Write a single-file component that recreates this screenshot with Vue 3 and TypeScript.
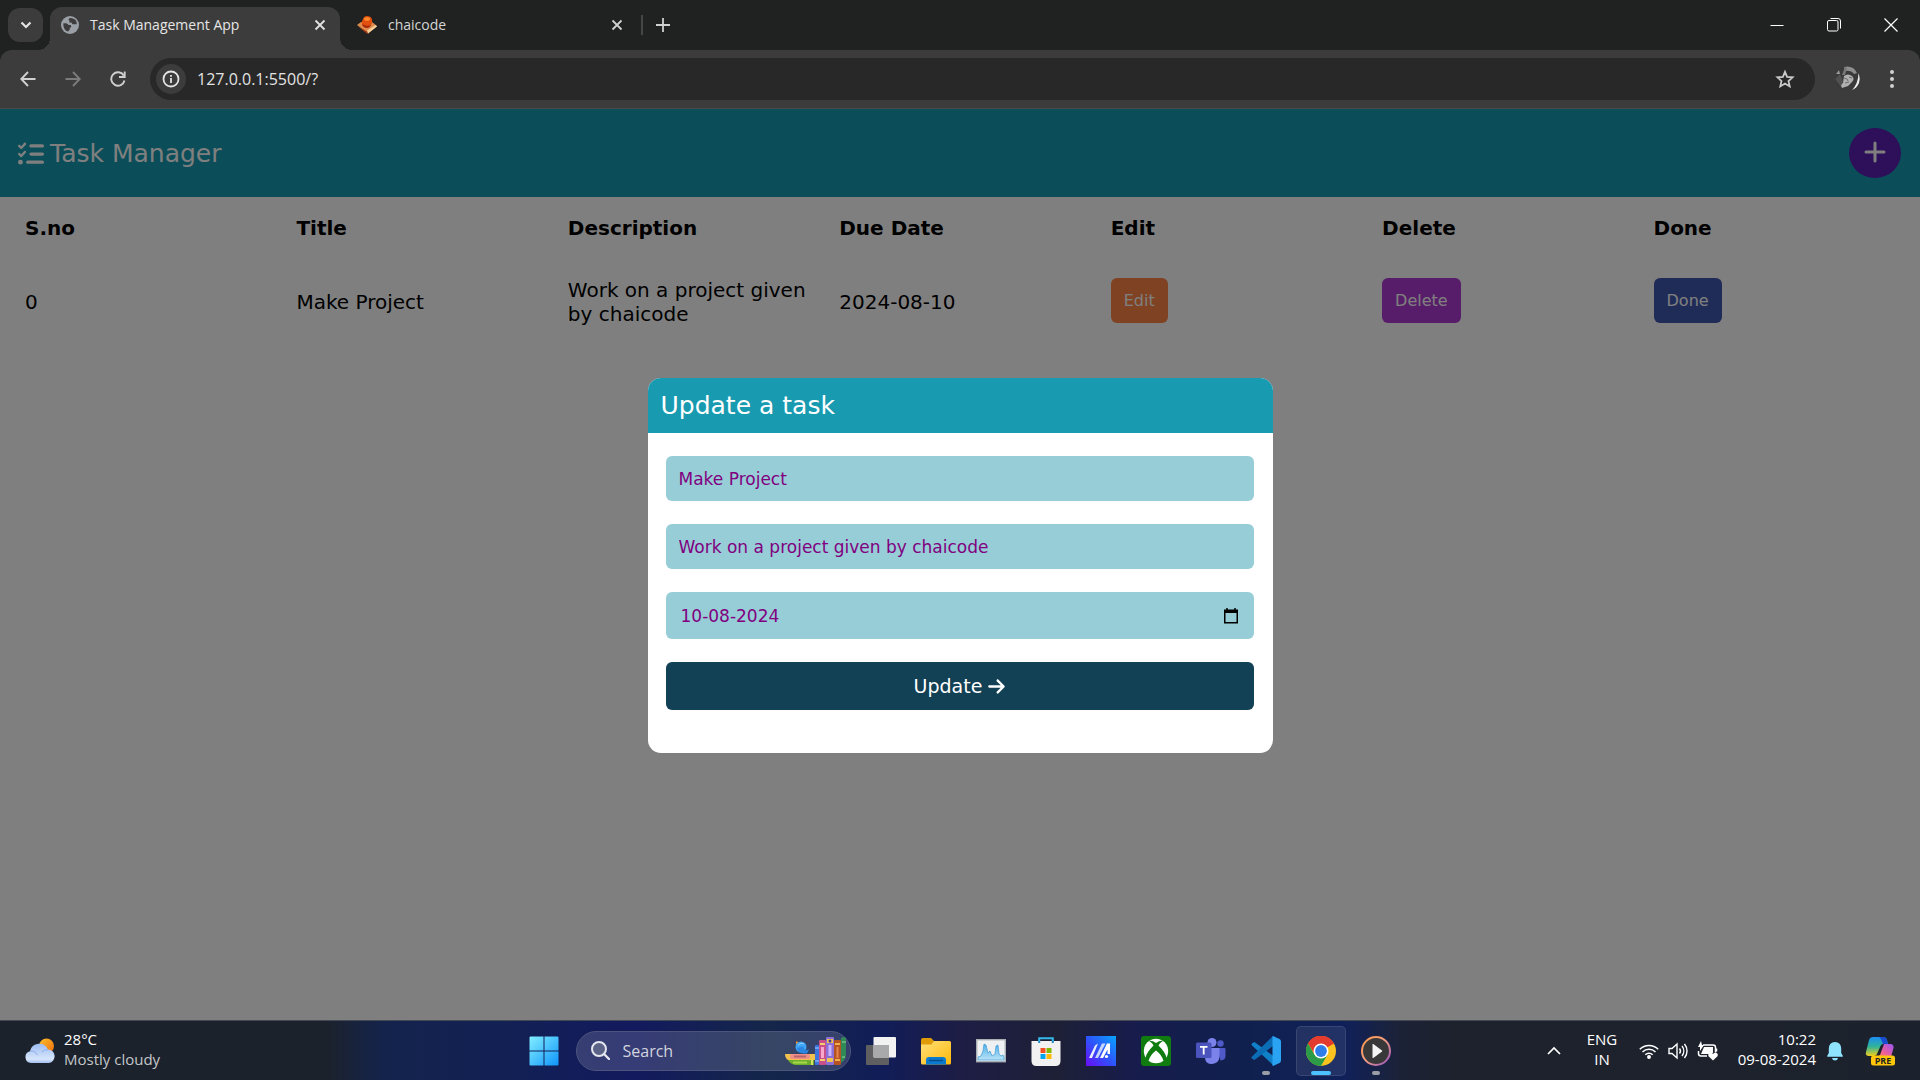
<script setup lang="ts">
import { ref } from 'vue'

interface Task {
  id: number
  title: string
  description: string
  due: string
}

const columns: string[] = ['S.no', 'Title', 'Description', 'Due Date', 'Edit', 'Delete', 'Done']
const tasks = ref<Task[]>([
  { id: 0, title: 'Make Project', description: 'Work on a project given by chaicode', due: '2024-08-10' },
])

const title = ref('Make Project')
const description = ref('Work on a project given by chaicode')
const dueDate = ref('10-08-2024')
const search = ref('')
const address = ref('127.0.0.1:5500/?')
</script>

<template>
  <div class="desktop">
    <div class="tabstrip">
      <button class="tab-search" aria-label="Search tabs">
        <svg width="12" height="8" viewBox="0 0 12 8"><path d="M1.5 1.5 6 6l4.500-4.500" fill="none" stroke="#e3e3e3" stroke-width="2.200" /></svg>
      </button>
      <div class="tab active">
        <svg width="18" height="18" viewBox="0 0 18 18">
          <circle cx="9" cy="9" r="9" fill="#9aa0a6" />
          <path d="M2.200 7.500c2.500-.6 4.500 0 5.300 1.500h2.300l.4 2-1.500 1.200v1.600L7 15.600Q2.500 14.500 2.200 7.500z" fill="#3c3c3c" />
          <path d="M8.500 2.200c-1.500 1-1 2 .2 2.600L8 6.500h2.500l1 1.700h4.300Q15.600 3 11 2.300q-1.300-.3-2.500-.1z" fill="#3c3c3c" />
        </svg>
        <span class="tab-name">Task Management App</span>
        <button class="icon-btn" aria-label="Close tab">
          <svg width="12" height="12" viewBox="0 0 12 12"><path d="M1.500 1.500l9 9M10.500 1.500l-9 9" stroke="#e3e3e3" stroke-width="1.800" /></svg>
        </button>
      </div>
      <div class="tab">
        <svg width="20" height="18" viewBox="0 0 20 18">
          <path d="M0 9l4-3h11l5 4-9 7.500z" fill="#dd8b4c" />
          <path d="M1 10.500l9 5 8-5.500-8 7.800z" fill="#9c3517" />
          <path d="M10 14.500l8.500-5.500 1.500 1.500-9 7z" fill="#f8cf98" />
          <path d="M6 3q1-3 4-3t4.500 2q1.500 4-.5 7-4 4-8 1-2.500-3 0-7z" fill="#e2500f" />
          <path d="M5 8q5 3 9 1-1 3-4 3-4 0-5-4z" fill="#a82a0b" />
          <ellipse cx="10" cy="3" rx="3" ry="1.800" fill="#ff8a2a" />
        </svg>
        <span class="tab-name">chaicode</span>
        <button class="icon-btn" aria-label="Close tab">
          <svg width="12" height="12" viewBox="0 0 12 12"><path d="M1.500 1.500l9 9M10.500 1.500l-9 9" stroke="#d0d0d0" stroke-width="1.800" /></svg>
        </button>
      </div>
      <span class="tab-sep"></span>
      <button class="icon-btn new-tab" aria-label="New tab">
        <svg width="14" height="14" viewBox="0 0 14 14"><path d="M7 0v14M0 7h14" stroke="#d0d0d0" stroke-width="1.800" /></svg>
      </button>
      <div class="window-controls">
        <button aria-label="Minimize"><svg width="14" height="14" viewBox="0 0 14 14"><path d="M.5 7.500h13" stroke="#fff" /></svg></button>
        <button aria-label="Restore">
          <svg width="14" height="14" viewBox="0 0 14 14" fill="none" stroke="#fff"><rect x=".5" y="2.500" width="10.500" height="10.500" rx="1.500" /><path d="M3.500.5H11q2.500 0 2.500 2.500V10.500" /></svg>
        </button>
        <button aria-label="Close"><svg width="14" height="14" viewBox="0 0 14 14"><path d="M.5.5l13 13M13.500.5l-13 13" stroke="#fff" stroke-width="1.200" /></svg></button>
      </div>
    </div>

    <div class="toolbar">
      <button class="nav-btn" aria-label="Back">
        <svg width="16" height="16" viewBox="0 0 16 16" fill="none" stroke="#d0d0d0" stroke-width="1.900"><path d="M15.500 8H1.500M8 1L1.300 8 8 15" /></svg>
      </button>
      <button class="nav-btn" aria-label="Forward">
        <svg width="16" height="16" viewBox="0 0 16 16" fill="none" stroke="#7c7c7c" stroke-width="1.900"><path d="M.5 8h14M8 1l6.700 7L8 15" /></svg>
      </button>
      <button class="nav-btn" aria-label="Reload">
        <svg width="16" height="16" viewBox="0 0 16 16" fill="none" stroke="#d0d0d0" stroke-width="1.900"><path d="M13.700 4.500A6.700 6.700 0 1 0 14.500 9.500M14.700.5v5.500H9" /></svg>
      </button>
      <div class="omnibox">
        <button class="info" aria-label="Site information">
          <svg width="18" height="18" viewBox="0 0 18 18"><circle cx="9" cy="9" r="7.500" fill="none" stroke="#e3e3e3" stroke-width="1.800" /><path d="M9 8v5M9 5v1.800" stroke="#e3e3e3" stroke-width="1.800" /></svg>
        </button>
        <input v-model="address" class="url" type="text" aria-label="Address" />
        <button class="icon-btn" aria-label="Bookmark this tab">
          <svg width="20" height="20" viewBox="0 0 20 20"><path d="M10 2.800l2.100 5 5.500.5-4.100 3.700 1.200 5.400L10 14.600l-4.700 2.800 1.200-5.400L2.400 8.300l5.500-.5z" fill="none" stroke="#c9c9c9" stroke-width="1.800" /></svg>
        </button>
      </div>
      <button class="icon-btn" aria-label="Profile">
        <svg width="25" height="25" viewBox="0 0 25 25">
          <clipPath id="face"><circle cx="12.500" cy="12.500" r="12.500" /></clipPath>
          <g clip-path="url(#face)">
            <rect width="25" height="25" fill="#3a3a3a" />
            <path d="M9 1q9-2 13 6l-3 1q-3-4-9-3z" fill="#8e8e8e" />
            <path d="M7 9l3-8 2 1-2 7z" fill="#777" />
            <path d="M0 13l5-5 3 7-2 6z" fill="#505050" />
            <path d="M1 8l3-4 1 4z" fill="#999" />
            <path d="M9 10q4-3 8 0 3 3 0 6l-4 4-6 2q-2-3 1-5z" fill="#b0b0b0" />
            <path d="M9 12l3 1M14 11l3 1M10 17l4-1M12 13l1 2" stroke="#6a6a6a" />
            <path d="M23.500 7q4 10-5 18h-2q7-8 7-18z" fill="#eee" />
          </g>
        </svg>
      </button>
      <button class="icon-btn menu" aria-label="Menu">
        <svg width="4" height="18" viewBox="0 0 4 18" fill="#d0d0d0"><circle cx="2" cy="2" r="2" /><circle cx="2" cy="9" r="2" /><circle cx="2" cy="16" r="2" /></svg>
      </button>
    </div>

    <main class="page">
      <header class="app-header">
        <h1>
          <svg width="26" height="26" viewBox="0 0 512 512" fill="currentColor"><path d="M152.100 38.200c9.900 8.900 10.700 24 1.800 33.900l-72 80c-4.400 4.900-10.600 7.800-17.200 7.900s-12.900-2.400-17.600-7L7 113C-2.300 103.600-2.300 88.400 7 79s24.600-9.400 33.900 0l22.100 22.100 55.100-61.200c8.900-9.900 24-10.700 33.900-1.800zm0 160c9.900 8.900 10.700 24 1.800 33.900l-72 80c-4.400 4.900-10.600 7.800-17.200 7.900s-12.900-2.400-17.600-7L7 273c-9.400-9.400-9.400-24.600 0-33.900s24.600-9.400 33.900 0l22.100 22.100 55.100-61.200c8.900-9.900 24-10.700 33.900-1.800zM224 96c0-17.700 14.300-32 32-32H480c17.700 0 32 14.300 32 32s-14.300 32-32 32H256c-17.700 0-32-14.300-32-32zm0 160c0-17.700 14.300-32 32-32H480c17.700 0 32 14.300 32 32s-14.300 32-32 32H256c-17.700 0-32-14.300-32-32zM160 416c0-17.700 14.300-32 32-32H480c17.700 0 32 14.300 32 32s-14.300 32-32 32H192c-17.700 0-32-14.300-32-32zM48 368a48 48 0 1 1 0 96 48 48 0 1 1 0-96z" /></svg>
          Task Manager
        </h1>
        <button class="add" aria-label="Add task">
          <svg width="22" height="22" viewBox="0 0 22 22"><path d="M11 2v18M2 11h18" stroke="#fff" stroke-width="3" stroke-linecap="round" /></svg>
        </button>
      </header>

      <table class="tasks">
        <thead>
          <tr><th v-for="c in columns" :key="c" scope="col">{{ c }}</th></tr>
        </thead>
        <tbody>
          <tr v-for="t in tasks" :key="t.id">
            <td>{{ t.id }}</td>
            <td>{{ t.title }}</td>
            <td>{{ t.description }}</td>
            <td>{{ t.due }}</td>
            <td class="control"><button class="action edit">Edit</button></td>
            <td class="control"><button class="action delete">Delete</button></td>
            <td class="control"><button class="action done">Done</button></td>
          </tr>
        </tbody>
      </table>

      <div class="overlay">
        <form class="modal" role="dialog" aria-labelledby="modal-title" @submit.prevent>
          <h2 id="modal-title">Update a task</h2>
          <div class="fields">
            <input v-model="title" class="field" type="text" aria-label="Title" />
            <input v-model="description" class="field" type="text" aria-label="Description" />
            <div class="field date">
              <input v-model="dueDate" type="text" aria-label="Due date" />
              <button type="button" class="icon-btn" aria-label="Open calendar">
                <svg width="16" height="16" viewBox="0 0 16 16"><path d="M1 1.500h14V15.500H1zM2.500 5v9h11V5z" fill="#000" fill-rule="evenodd" /><path d="M4 0v2M12 0v2" stroke="#000" stroke-width="1.500" /></svg>
              </button>
            </div>
            <button class="submit" type="submit">
              Update
              <svg width="17" height="19" viewBox="0 0 448 512" fill="currentColor"><path d="M438.600 278.600c12.500-12.500 12.500-32.800 0-45.300l-160-160c-12.500-12.500-32.800-12.500-45.300 0s-12.500 32.800 0 45.300L338.800 224 32 224c-17.700 0-32 14.300-32 32s14.300 32 32 32l306.700 0L233.400 393.400c-12.500 12.500-12.500 32.800 0 45.300s32.800 12.500 45.300 0l160-160z" /></svg>
            </button>
          </div>
        </form>
      </div>
    </main>

    <footer class="taskbar">
      <div class="side">
        <button class="weather">
          <svg width="30" height="26" viewBox="0 0 30 26">
            <defs>
              <linearGradient id="sun" x1="0" y1="0" x2="1" y2="1"><stop offset="0" stop-color="#fbc02d" /><stop offset="1" stop-color="#f26b0c" /></linearGradient>
              <linearGradient id="cloud" x1="0" y1="0" x2="0" y2="1"><stop offset="0" stop-color="#9dbdf3" /><stop offset=".8" stop-color="#d6e5fb" /><stop offset="1" stop-color="#a3c0ee" /></linearGradient>
            </defs>
            <circle cx="21.500" cy="8" r="7.500" fill="url(#sun)" />
            <path d="M6 25a6 6 0 0 1-1-11.800A9.500 9.500 0 0 1 23 11.500 6.800 6.800 0 0 1 24 25z" fill="url(#cloud)" />
            <path d="M5 13.200q5-1 7.500 4M17 14q2-2.700 6-2.500" fill="none" stroke="#8fb0ea" />
          </svg>
          <span class="stack"><span>28°C</span><span class="dim">Mostly cloudy</span></span>
        </button>
      </div>

      <div class="apps">
        <button class="app" aria-label="Start">
          <svg width="30" height="30" viewBox="0 0 30 30">
            <defs><linearGradient id="win" gradientUnits="userSpaceOnUse" x1="0" y1="0" x2="30" y2="30"><stop offset="0" stop-color="#84f0ff" /><stop offset="1" stop-color="#0d93fa" /></linearGradient></defs>
            <path d="M1.500.5h13v14h-14v-13q0-1 1-1zM15.500.5h13q1 0 1 1v13h-14zM.5 15.500h14v14h-13q-1 0-1-1zM15.500 15.500h14v13q0 1-1 1h-13z" fill="url(#win)" />
          </svg>
        </button>
        <div class="search">
          <svg width="19" height="19" viewBox="0 0 19 19" fill="none" stroke="#e4e6ee"><circle cx="8" cy="8" r="7" stroke-width="2" fill="#5b6288" /><path d="M13 13l5 5" stroke-width="2.400" stroke-linecap="round" /></svg>
          <input v-model="search" type="text" placeholder="Search" aria-label="Search" />
          <svg width="62" height="30" viewBox="0 0 62 30">
            <path d="M0 18h30v6H3q-3-2-3-6z" fill="#f2c14e" /><path d="M3 24h26v5H10q-5-1-7-5z" fill="#6fae2c" />
            <rect x="5" y="18" width="20" height="5" rx="2" fill="#ef8f86" /><rect x="9" y="19.500" width="12" height="2" fill="#b7656c" />
            <path d="M8 26.500h14" stroke="#a5d64b" stroke-width="2" /><path d="M26 24h2v5h-2z" fill="#d9e06a" />
            <path d="M11 5l0 5 4-3z" fill="#f08a24" /><circle cx="16" cy="11" r="5.500" fill="#3ea4f5" /><path d="M12 12q1 5 6 5.500h4l2-4-4 1-2-4z" fill="#2a86e0" /><path d="M13 9q3-3 6-1" stroke="#8fd0ff" fill="none" />
            <rect x="30" y="9" width="4" height="20" rx="1" fill="#3b76df" /><path d="M30 12h4M30 25h4" stroke="#a7c8ff" />
            <rect x="34" y="4" width="7" height="25" rx="1" fill="#c9508a" /><path d="M35 8h5M35 24h5" stroke="#f2cd72" stroke-width="2" /><path d="M37.500 11v11" stroke="#f6a7cb" stroke-width="3" />
            <rect x="41" y="1" width="8" height="28" rx="1" fill="#8d6fd6" /><path d="M42 3h6v4h-6zM42 22h6v4h-6z" fill="#f0c34e" /><path d="M45 9v11" stroke="#c9b5ff" stroke-width="3" /><circle cx="45" cy="5" r="1.500" fill="#4c3793" />
            <rect x="49" y="4" width="7" height="25" rx="1" fill="#b55322" /><path d="M50 8h5M50 24h5" stroke="#f2b04c" stroke-width="2" /><path d="M52.500 11v11" stroke="#e8854a" stroke-width="2" />
            <path d="M56 2q3-2 5 0v16q0 6-5 9z" fill="#2f8a55" /><path d="M57 6h4M57 21h3" stroke="#9bd6a0" />
          </svg>
        </div>
        <button class="app" aria-label="Task view">
          <svg width="30" height="30" viewBox="0 0 30 30"><rect y="9" width="23" height="20" rx="1" fill="#5f5f62" /><rect x="7.500" y="1" width="22.500" height="20.500" rx="1" fill="#f2f2f2" /><path d="M7.500 9H23v12.500H7.500z" fill="#a9a9ab" /></svg>
        </button>
        <button class="app" aria-label="File Explorer">
          <svg width="30" height="30" viewBox="0 0 30 30">
            <defs><linearGradient id="fold" x1="0" y1="0" x2="1" y2="1"><stop offset="0" stop-color="#ffe07a" /><stop offset="1" stop-color="#ffb90a" /></linearGradient></defs>
            <path d="M0 4q0-2 2-2h8l3 3v6H0z" fill="#e09c06" /><path d="M0 8.500h10.500l2.500-3.500H28.500q1.500 0 1.500 1.500V27q0 1.500-1.500 1.500H1.500Q0 28.500 0 27z" fill="url(#fold)" />
            <path d="M5 28.500V24q0-3 3-3h14q3 0 3 3v4.500z" fill="#0b7bd0" /><path d="M8.500 24.500h13" stroke="#0a4d8c" stroke-width="1.300" stroke-linecap="round" />
          </svg>
        </button>
        <button class="app" aria-label="Resource Monitor">
          <svg width="30" height="30" viewBox="0 0 30 30">
            <defs><linearGradient id="mon" x1="0" y1="0" x2="0" y2="1"><stop offset="0" stop-color="#4fb1e8" /><stop offset="1" stop-color="#b8e2f7" /></linearGradient></defs>
            <rect x=".7" y="3.700" width="28.600" height="22" fill="#eef0f2" stroke="#a9aeb5" stroke-width="1.400" />
            <path d="M2 21l3-1 2-5 1-7 2 1 2 8 2-2 2 5 3-2 1-8 2-1 1 9 2 2 2-1 1 2v3H2z" fill="url(#mon)" stroke="#3f9bd6" stroke-width=".7" />
          </svg>
        </button>
        <button class="app" aria-label="Microsoft Store">
          <svg width="30" height="30" viewBox="0 0 30 30">
            <path d="M8.200 7V2.200h13.600V7" fill="none" stroke="#35b9e9" stroke-width="2" /><path d="M.5 5h29v20q0 5-5 5h-19q-5 0-5-5z" fill="#f1f1f1" /><path d="M8.200 5v2M21.800 5v2" stroke="#1a8dc4" stroke-width="2" />
            <path d="M9.500 12h5v5h-5z" fill="#f25022" /><path d="M15.500 12h5v5h-5z" fill="#7fba00" /><path d="M9.500 18h5v5h-5z" fill="#00a4ef" /><path d="M15.500 18h5v5h-5z" fill="#ffb900" />
          </svg>
        </button>
        <button class="app" aria-label="MyASUS">
          <svg width="30" height="30" viewBox="0 0 30 30">
            <defs><linearGradient id="asus" x1="0" y1="1" x2="1" y2="0"><stop offset="0" stop-color="#6a0cf5" /><stop offset=".5" stop-color="#2d55fb" /><stop offset="1" stop-color="#08a5ff" /></linearGradient></defs>
            <path d="M0 0h30v30H0z" fill="url(#asus)" /><path d="M3 22L9 9.500l3-2L6 22z" fill="#e9eefc" /><path d="M9 22l7-14.500h3.500L12 22z" fill="#c6d5fb" /><path d="M14 22L21 7.500h3V18l-2.500 0v-4.500L17 22z" fill="#fff" /><circle cx="20.500" cy="20.500" r="1.600" fill="#fff" />
          </svg>
        </button>
        <button class="app" aria-label="Xbox">
          <svg width="30" height="30" viewBox="0 0 30 30">
            <rect width="30" height="30" rx="3" fill="#107c10" /><circle cx="15" cy="15" r="12.200" fill="#fff" />
            <path d="M7 5q4-1 8 2 4-3 8-2-3 0-5.500 4.500Q25 17 25.500 22q-1 2-3 3Q21 19 15 14.500 9 19 7.500 25q-2-1-3-3Q5 17 12.500 9.500 10 5 7 5z" fill="#107c10" />
          </svg>
        </button>
        <button class="app" aria-label="Teams">
          <svg width="30" height="30" viewBox="0 0 30 30">
            <circle cx="24.500" cy="7.500" r="3.200" fill="#5059c9" /><path d="M21 12h7.500q1 0 1 1v7q0 4-5 4.500z" fill="#5059c9" />
            <circle cx="16" cy="6.500" r="4.500" fill="#7b83eb" /><path d="M9 12h13.500q1 0 1 1v7.500q-.5 7-7.500 7.500t-7-7z" fill="#7b83eb" />
            <rect y="6.500" width="15.500" height="15.500" rx="1.500" fill="#4b53bc" /><path d="M4 10.800h7.500M7.700 10.800v7.700" stroke="#fff" stroke-width="1.800" />
          </svg>
        </button>
        <button class="app" aria-label="Visual Studio Code">
          <svg width="30" height="30" viewBox="0 0 30 30">
            <path d="M1 7.200L3.500 6 22.500 20v9.500L1 9.500q-1-1.200 0-2.300z" fill="#1080c8" /><path d="M22 0L1 20.500q-1 1 0 2.200L3.500 24 22.500 9.500z" fill="#0b6db5" />
            <path d="M22 0l6.500 3q1.500.8 1.500 2.500v19q0 1.700-1.500 2.500L22 30q-1-.3-.5-2V2q-.5-1.700.5-2z" fill="#2aa4f2" />
          </svg>
          <i class="running"></i>
        </button>
        <button class="app current" aria-label="Google Chrome">
          <svg width="30" height="30" viewBox="0 0 30 30">
            <circle cx="15" cy="15" r="15" fill="#fcc31e" /><path d="M15 15L2 7.500A15 15 0 0 1 28 7.500z" fill="#e33b2e" /><path d="M15 7.500h13A15 15 0 0 0 2 7.500L8.500 18z" fill="#e33b2e" />
            <path d="M2 7.500A15 15 0 0 0 15 30l6.500-11.300L15 15l-6.500 3.700z" fill="#2b9b48" /><circle cx="15" cy="15" r="7.500" fill="#fff" /><circle cx="15" cy="15" r="5.900" fill="#2f7de9" />
          </svg>
          <i class="running wide"></i>
        </button>
        <button class="app" aria-label="Media Player">
          <svg width="30" height="30" viewBox="0 0 30 30">
            <defs><linearGradient id="ring" x1="0" y1="0" x2="1" y2="1"><stop offset="0" stop-color="#ff9a45" /><stop offset=".5" stop-color="#ee9a86" /><stop offset="1" stop-color="#9450c0" /></linearGradient></defs>
            <circle cx="15" cy="15" r="14" fill="#383838" stroke="url(#ring)" stroke-width="2" /><path d="M11.500 8.500v13q0 .8.800.4L21 15.600q.8-.6 0-1.200L12.300 8.100q-.8-.4-.8.400z" fill="#f4f4f4" />
          </svg>
          <i class="running"></i>
        </button>
      </div>

      <div class="side tray">
        <button class="icon-btn" aria-label="Show hidden icons">
          <svg width="14" height="9" viewBox="0 0 14 9"><path d="M1 8l6-6 6 6" fill="none" stroke="#fff" stroke-width="1.700" /></svg>
        </button>
        <button class="lang"><span>ENG</span><span>IN</span></button>
        <button class="status" aria-label="Network, volume and battery">
          <svg width="20" height="16" viewBox="0 0 20 16" fill="none" stroke="#fff" stroke-width="1.500"><path d="M.8 6.300a13 13 0 0 1 18.400 0M3.500 9a9.200 9.200 0 0 1 13 0M6.300 11.700a5.300 5.300 0 0 1 7.400 0" /><circle cx="10" cy="14" r="1.200" fill="#fff" /></svg>
          <svg width="20" height="18" viewBox="0 0 20 18" fill="none" stroke="#fff" stroke-width="1.400"><path d="M1 6.500h3L9 2v14l-5-4.500H1z" /><path d="M11.500 6.500a4 4 0 0 1 0 5M14 4a8 8 0 0 1 0 10M16.500 2a11 11 0 0 1 0 14" /></svg>
          <svg width="22" height="20" viewBox="0 0 22 20"><path d="M6 4h10q2.500 0 2.500 2.500v5M10 15H4q-2.500 0-2.500-2.500V10" fill="none" stroke="#fff" stroke-width="1.500" /><path d="M7 6h9v6l-5 1H4z" fill="#fff" /><path d="M4 0L1 6h2v4l4-6H5z" fill="#fff" /><path d="M16 19.500l-4.500-4.300q-1-2.700 1.500-3.500 2-.3 3 1.300 1-1.600 3-1.300 2.500.8 1.500 3.500z" fill="#fff" /><path d="M19.500 7.500v3" stroke="#fff" stroke-width="1.500" /></svg>
        </button>
        <button class="clock"><span>10:22</span><span>09-08-2024</span></button>
        <button class="icon-btn bell" aria-label="Notifications">
          <svg width="16" height="20" viewBox="0 0 16 20" fill="#8fe3ff"><path d="M8 1q6 .3 6.200 6.500V12l1.700 3q.2.700-.6.700H.7q-.8 0-.6-.7l1.700-3V7.500Q2 1.300 8 1zM5 17h6q-.5 2.500-3 2.500T5 17z" /></svg>
        </button>
        <button class="icon-btn" aria-label="Copilot">
          <svg width="30" height="30" viewBox="0 0 30 30">
            <defs>
              <linearGradient id="cpa" x1="0" y1="0" x2="0" y2="1"><stop offset="0" stop-color="#1c8df2" /><stop offset=".5" stop-color="#2fb39a" /><stop offset="1" stop-color="#f0cf1a" /></linearGradient>
              <linearGradient id="cpb" x1="1" y1="0" x2="0" y2="1"><stop offset="0" stop-color="#9a55f5" /><stop offset=".6" stop-color="#ee5f9d" /><stop offset="1" stop-color="#ff8a4a" /></linearGradient>
            </defs>
            <path d="M8 1h10q3 0 4 3l1 4h-5q-2 0-3 3l-3 7q-1 2-3 2H4q-4 0-3-4L4 4q1-3 4-3z" fill="url(#cpa)" /><path d="M14 1h4q3 0 4 3l1 4h-5q-2-6-4-7z" fill="#1a4bd0" />
            <path d="M19 8h6q4 0 3.500 4L26 21H12l3-2z" fill="url(#cpb)" />
            <rect x="6" y="19.500" width="24" height="10" rx="2.500" fill="#ffc60a" />
            <text x="18" y="28" text-anchor="middle" class="pre">PRE</text>
          </svg>
        </button>
      </div>
    </footer>
  </div>
</template>

<style>
body {
  margin: 0;
}
</style>

<style scoped>
.desktop {
  display: flex;
  flex-direction: column;
  min-height: 100vh;
  font-family: 'Open Sans', 'Noto Sans', sans-serif;
  font-size: 15px;
  color: #fff;
  background: #202221;
}
.desktop *,
.desktop *::before,
.desktop *::after {
  box-sizing: border-box;
}
button,
input {
  font: inherit;
  color: inherit;
  border: 0;
  padding: 0;
  background: none;
  outline: none;
}
svg {
  display: block;
  flex: none;
}

/* Browser chrome */
.tabstrip {
  display: flex;
  align-items: flex-start;
  height: 50px;
  padding: 0 1px 0 8px;
}
.tab-search {
  display: grid;
  place-items: center;
  width: 35px;
  height: 34px;
  margin: 8px 7px 0 0;
  border-radius: 12px;
  background: #3c3c3c;
}
.tab {
  display: flex;
  align-items: center;
  width: 297px;
  height: 37px;
  margin-top: 7px;
  padding: 0 14px 2px 17px;
  font-size: 14px;
  color: #d4d4d4;
}
.tab.active {
  position: relative;
  width: 290px;
  height: 43px;
  padding: 0 14px 8px 11px;
  border-radius: 12px 12px 0 0;
  background: #3c3c3c;
  color: #e6e6e6;
}
.tab.active::before,
.tab.active::after {
  content: '';
  position: absolute;
  bottom: 0;
  width: 12px;
  height: 12px;
}
.tab.active::before {
  left: -12px;
  background: radial-gradient(circle at 0 0, transparent 12px, #3c3c3c 12px);
}
.tab.active::after {
  right: -12px;
  background: radial-gradient(circle at 100% 0, transparent 12px, #3c3c3c 12px);
}
.tab-name {
  flex: 1;
  margin-left: 11px;
  line-height: 20px;
  white-space: nowrap;
}
.icon-btn {
  display: flex;
  flex: none;
}
.tab-sep {
  width: 2px;
  height: 20px;
  margin: 15px 13px 0 4px;
  background: #464646;
}
.new-tab {
  margin-top: 18px;
}
.window-controls {
  display: flex;
  margin-left: auto;
}
.window-controls button {
  display: grid;
  place-items: center;
  width: 57px;
  height: 49px;
}
.toolbar {
  display: flex;
  align-items: center;
  height: 59px;
  padding: 0 26px 1px 20px;
  border-bottom: 1px solid #4a4a4a;
  border-radius: 12px 12px 0 0;
  background: #3c3c3c;
}
.nav-btn {
  width: 16px;
  margin-right: 29px;
}
.omnibox {
  display: flex;
  align-items: center;
  flex: 1;
  height: 42px;
  margin: 0 20px 0 -5px;
  padding: 0 20px 0 6px;
  border-radius: 21px;
  background: #282828;
}
.info {
  display: grid;
  place-items: center;
  width: 30px;
  height: 30px;
  border-radius: 50%;
  background: #3c3c3c;
}
.url {
  flex: 1;
  margin-left: 11px;
  font-size: 16px;
  color: #e3e3e3;
}
.menu {
  margin-left: 30px;
}

/* Task page */
.page {
  position: relative;
  flex: 1;
  background: #fff;
  color: #000;
  font-family: Verdana, 'DejaVu Sans', sans-serif;
  font-size: 20px;
  line-height: 24px;
}
.app-header {
  display: flex;
  align-items: center;
  justify-content: space-between;
  height: 88px;
  padding: 0 19px 0 18px;
  background: #169ab0;
  color: #fff;
}
h1 {
  display: flex;
  align-items: center;
  gap: 6px;
  margin: 0;
  padding-top: 2px;
  font-size: 25px;
  font-weight: 400;
}
.add {
  display: grid;
  place-items: center;
  width: 52px;
  height: 50px;
  padding-bottom: 2px;
  border-radius: 50%;
  background: #5a1eb4;
}
.tasks {
  width: calc(100% - 20px);
  margin: 0 10px;
  table-layout: fixed;
  border-collapse: collapse;
}
th,
td {
  padding: 19px 15px;
  text-align: left;
}
.control {
  vertical-align: top;
}
.action {
  display: block;
  height: 45px;
  padding: 0 13px;
  border-radius: 6px;
  font-size: 16px;
  color: #fff;
}
.edit {
  background: #ff8446;
}
.delete {
  background: #b03ad4;
}
.done {
  background: #4058b0;
}
.overlay {
  position: absolute;
  inset: 0;
  display: flex;
  align-items: center;
  justify-content: center;
  padding-top: 2px;
  background: rgba(0, 0, 0, 0.5);
}
.modal {
  width: 625px;
  overflow: hidden;
  border-radius: 13px;
  background: #fff;
}
h2 {
  margin: 0;
  padding: 0 13px;
  font-size: 25px;
  font-weight: 400;
  line-height: 55px;
  background: #189ab0;
  color: #fff;
}
.fields {
  display: flex;
  flex-direction: column;
  gap: 23px;
  padding: 23px 19px 43px 18px;
}
.field {
  height: 45px;
  padding: 0 13px;
  border-radius: 6px;
  font-size: 17px;
  background: #97cdd6;
  color: #800080;
}
.date {
  display: flex;
  align-items: center;
  height: 47px;
  padding: 0 15px;
}
.date input {
  flex: 1;
}
.submit {
  display: flex;
  align-items: center;
  justify-content: center;
  gap: 6px;
  height: 48px;
  border-radius: 6px;
  font-size: 19px;
  background: #124055;
  color: #fff;
}

/* Windows taskbar */
.taskbar {
  display: flex;
  align-items: center;
  height: 60px;
  border-top: 1px solid #454b54;
  line-height: 20px;
  background: linear-gradient(90deg, #1c222c 0 17%, #14234c 20%, #122055 27%, #131a5e 33%, #14264a 40%, #111d58 46%, #1d1d45 50%, #1e2036 55%, #171c4c 59%, #10204e 65%, #10215a 70%, #1c2236 73%, #1e222c 76%, #1c222d);
}
.side {
  display: flex;
  align-items: center;
  flex: 1 1 0;
  height: 100%;
  padding: 0 25px;
}
.weather {
  display: flex;
  align-items: center;
  gap: 9px;
  text-align: left;
}
.stack,
.lang,
.clock {
  display: flex;
  flex-direction: column;
  padding-bottom: 3px;
}
.dim {
  color: #c4c6c9;
}
.apps {
  display: flex;
  align-items: center;
  height: 100%;
}
.app {
  position: relative;
  display: grid;
  place-items: center;
  width: 55px;
  height: 50px;
}
.current::before {
  content: '';
  position: absolute;
  inset: 0 3px 0 2px;
  border: 1px solid rgba(255, 255, 255, 0.1);
  border-radius: 5px;
  background: rgba(255, 255, 255, 0.08);
}
.app svg {
  position: relative;
}
.running {
  position: absolute;
  bottom: 1px;
  left: 50%;
  width: 8px;
  height: 4px;
  margin-left: -4px;
  border-radius: 2px;
  background: #9a9ca6;
}
.running.wide {
  width: 20px;
  margin-left: -10px;
  background: #4cc2ff;
}
.search {
  display: flex;
  align-items: center;
  width: 275px;
  height: 40px;
  margin: 0 3px 0 4px;
  padding: 0 3px 0 14px;
  border: 1px solid #4c547c;
  border-radius: 20px;
  background: rgba(255, 255, 255, 0.15);
}
.search input {
  flex: 1;
  min-width: 0;
  margin-left: 13px;
  font-size: 16px;
}
.search input::placeholder {
  color: #d2d4de;
  opacity: 1;
}
.tray {
  justify-content: flex-end;
}
.lang {
  width: 40px;
  margin: 0 17px 0 21px;
  align-items: center;
}
.status {
  display: flex;
  align-items: center;
  gap: 9px;
}
.clock {
  width: 86px;
  margin: 0 11px;
  align-items: flex-end;
}
.bell {
  margin-right: 22px;
}
.pre {
  font-size: 9px;
  font-weight: 700;
  fill: #222;
}
</style>
